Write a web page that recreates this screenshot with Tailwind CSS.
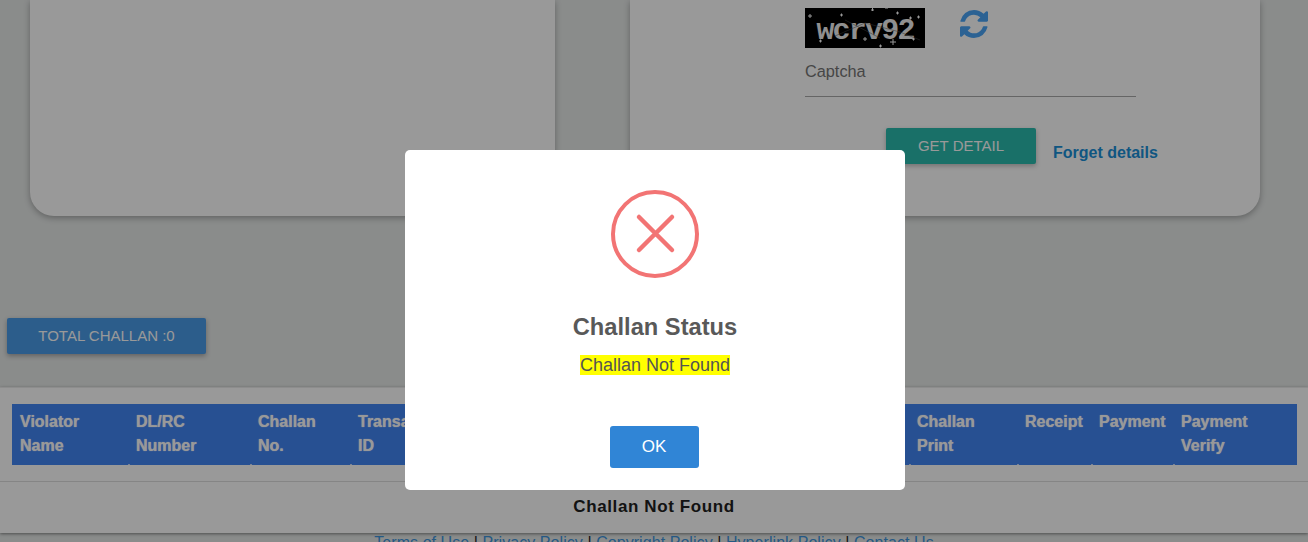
<!DOCTYPE html>
<html lang="en">
<head>
    <meta charset="UTF-8">
    <meta name="viewport" content="width=device-width, initial-scale=1.0">
    <title>Challan Status</title>
    <script src="https://cdn.jsdelivr.net/npm/@tailwindcss/browser@4"></script>
</head>
<body class="relative h-[542px] overflow-hidden bg-[#e6e9e8] font-['Liberation_Sans',Arial,sans-serif] text-[#212121]">

    <!-- page behind the dialog -->
    <section class="flex h-[216px] gap-[75px] pl-[30px]">
        <div class="w-[525px] rounded-b-[24px] bg-white shadow-[0_2px_6px_rgba(0,0,0,0.3)]"></div>
        <div class="w-[630px] rounded-b-[24px] bg-white pl-[175px] pt-[8px] shadow-[0_2px_6px_rgba(0,0,0,0.3)]">
            <div class="flex items-start gap-[35px]">
                <div class="relative flex h-[40px] w-[120px] items-center justify-center overflow-hidden bg-black pt-[6px] font-['Liberation_Mono',monospace] text-[30px] font-bold tracking-[-1.800px] text-[#f0f0f0]">
                    wcrv92
                    <svg class="absolute inset-0" width="120" height="40" viewBox="0 0 120 40" fill="none" stroke="#ffffff" stroke-width="1">
                        <path d="M3 8h4M5 6v4M35 7h3M36.500 5.500v3M66 2h3M67.500 0v3M80 0h3M91 5h3M92.500 3.500v3M104 10h3M105.500 8.500v3M112 9h3M113.500 7.500v3M14 33h3M15.500 31.500v3M58 31h4M60 29v4M74 38h3M75.500 36.500v3M85 34h6M88 31v6M94 29h4M96 27v4M107 31h3M108.500 29.500v3"/>
                        <path d="M30 28L60 15L95 24L115 32M40 12L75 30" stroke="#555555" stroke-width="0.5"/>
                    </svg>
                </div>
                <svg class="mt-[2px]" width="28" height="28" viewBox="0 0 1536 1536" fill="#4aa3f5">
                    <path d="M1511 928q0 5-1 7-64 268-268 434.500t-478 166.500q-146 0-282.500-55t-243.500-157l-129 129q-19 19-45 19t-45-19-19-45v-448q0-26 19-45t45-19h448q26 0 45 19t19 45-19 45l-137 137q71 66 161 102t187 36q134 0 250-65t186-179q11-17 53-117 8-23 30-23h192q13 0 22.500 9.500t9.500 22.500zm25-800v448q0 26-19 45t-45 19h-448q-26 0-45-19t-19-45 19-45l138-138q-148-137-349-137-134 0-250 65t-186 179q-11 17-53 117-8 23-30 23h-199q-13 0-22.500-9.500t-9.500-22.500v-7q65-268 270-434.500t480-166.500q146 0 284 55.500t245 156.500l130-129q19-19 45-19t45 19 19 45z"/>
                </svg>
            </div>
            <div class="mt-[14px] h-[35px] w-[331px] border-b border-[#a8a8a8] text-[16.300px] leading-[18px] text-[#757575]">Captcha</div>
            <div class="mt-[31px] flex items-start">
                <button class="ml-[81px] h-[36px] w-[150px] rounded-[2px] bg-[#2bbbad] text-[15px] text-white shadow-[0_2px_5px_rgba(0,0,0,0.26)]">GET DETAIL</button>
                <a class="ml-[17px] mt-[16px] text-[16px] font-bold leading-[18px] text-[#1a8fd8]">Forget details</a>
            </div>
        </div>
    </section>

    <div class="ml-[7px] mt-[102px]">
        <button class="h-[36px] w-[199px] rounded-[2px] bg-[#4a9be8] text-[15px] text-white shadow-[0_2px_5px_rgba(0,0,0,0.3)]">TOTAL CHALLAN :0</button>
    </div>

    <section class="mt-[33px] h-[146px] border-t border-[#ebebeb] bg-white pt-[16px] shadow-[0_1px_3px_rgba(0,0,0,0.45)]">
        <div class="mx-[12px] flex h-[61px] w-[1285px] bg-[#4285f4] text-[16px] font-bold leading-[24px] text-white [text-shadow:0_0_1px_#ffffff]">
            <div class="w-[116px] pl-[8px] pt-[6px]">Violator<br>Name</div>
            <div class="relative w-[122px] pl-[8px] pt-[6px]"><span class="absolute bottom-0 left-0 h-[1px] w-[2px] bg-white/70"></span>DL/RC<br>Number</div>
            <div class="relative w-[100px] pl-[8px] pt-[6px]"><span class="absolute bottom-0 left-0 h-[1px] w-[2px] bg-white/70"></span>Challan<br>No.</div>
            <div class="relative w-[559px] pl-[8px] pt-[6px]"><span class="absolute bottom-0 left-0 h-[1px] w-[2px] bg-white/70"></span>Transaction<br>ID</div>
            <div class="relative w-[108px] pl-[8px] pt-[6px]"><span class="absolute bottom-0 left-0 h-[1px] w-[2px] bg-white/70"></span>Challan<br>Print</div>
            <div class="relative w-[74px] pl-[8px] pt-[6px]"><span class="absolute bottom-0 left-0 h-[1px] w-[2px] bg-white/70"></span>Receipt</div>
            <div class="relative w-[82px] pl-[8px] pt-[6px]"><span class="absolute bottom-0 left-0 h-[1px] w-[2px] bg-white/70"></span>Payment</div>
            <div class="relative w-[124px] pl-[8px] pt-[6px]"><span class="absolute bottom-0 left-0 h-[1px] w-[2px] bg-white/70"></span>Payment<br>Verify</div>
        </div>
        <div class="mt-[16px] border-t border-[#dedede] pt-[16px] text-center text-[17px] font-bold leading-[18px] tracking-[0.6px]">Challan Not Found</div>
    </section>

    <footer class="pt-[1px] text-center text-[16px] leading-[18px] tracking-[0.060px] text-[#222222]">
        <a class="text-[#3f94dc]">Terms of Use</a> | <a class="text-[#3f94dc]">Privacy Policy</a> | <a class="text-[#3f94dc]">Copyright Policy</a> | <a class="text-[#3f94dc]">Hyperlink Policy</a> | <a class="text-[#3f94dc]">Contact Us</a>
    </footer>

    <!-- dialog -->
    <div class="fixed inset-0 bg-black/40">
        <div class="ml-[405px] mt-[150px] flex h-[340px] w-[500px] flex-col items-center rounded-[5px] bg-white pt-[40px]">
            <svg width="88" height="88" viewBox="0 0 88 88" fill="none" stroke="#f27474" stroke-linecap="round">
                <circle cx="44" cy="44" r="42" stroke-width="4"/>
                <path d="M28 27L61 60M61 27L28 60" stroke-width="4.500"/>
            </svg>
            <h2 class="mt-[35px] text-[23.700px] font-bold leading-[28px] text-[#595959]">Challan Status</h2>
            <p class="mt-[14px] bg-[#ffff00] text-[18px] leading-[20px] text-[#545454]">Challan Not Found</p>
            <button class="-ml-[2px] mt-[51px] h-[42px] w-[89px] rounded-[3px] bg-[#3085d6] text-[17px] text-white">OK</button>
        </div>
    </div>
</body>
</html>
